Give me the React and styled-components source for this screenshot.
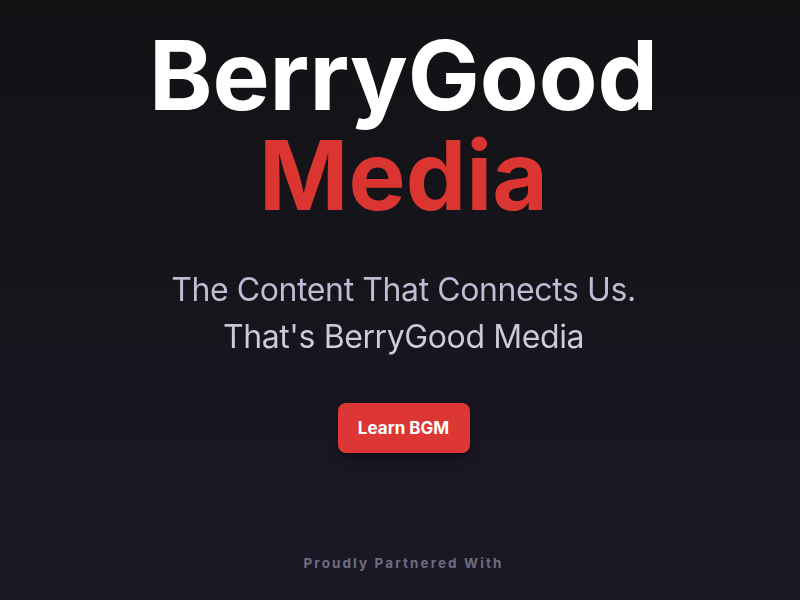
import React from "react";
import styled, { createGlobalStyle } from "styled-components";

const GlobalStyle = createGlobalStyle`
  html, body {
    margin: 0;
    padding: 0;
    background: #121215;
  }
  * { box-sizing: border-box; }
`;

const Page = styled.main`
  width: 800px;
  height: 600px;
  overflow: hidden;
  padding-left: 7px;
  background: linear-gradient(180deg, #121215 0%, #16151c 50%, #1b1826 100%);
  display: flex;
  flex-direction: column;
  align-items: center;
  font-family: Inter, "Noto Sans", sans-serif;
`;

const Title = styled.h1`
  margin: 25px 0 0;
  font-size: 96px;
  font-weight: 700;
  line-height: 100px;
  letter-spacing: 0;
  text-align: center;
  color: #ffffff;
`;

const Accent = styled.span`
  display: block;
  color: #db3532;
`;

const Tagline = styled.p`
  margin: 41px 0 0;
  font-size: 32px;
  font-weight: 400;
  line-height: 47px;
  text-align: center;
  letter-spacing: -0.4px;
  background: linear-gradient(180deg, #bdb8d6 0%, #c4c1d6 50%, #d6d5db 100%);
  -webkit-background-clip: text;
  background-clip: text;
  color: transparent;
`;

const Button = styled.button`
  margin-top: 43px;
  width: 132px;
  height: 50px;
  border: none;
  border-radius: 8px;
  background: #dc3734;
  color: #ffffff;
  font-family: inherit;
  font-size: 17px;
  font-weight: 700;
  letter-spacing: 0;
  box-shadow: 0 4px 10px rgba(0, 0, 0, 0.35);
  cursor: pointer;
`;

const Partners = styled.div`
  margin-top: 102px;
  font-size: 13.5px;
  font-weight: 700;
  letter-spacing: 2.1px;
  color: #6f6c80;
`;

export default function App() {
  return (
    <>
      <GlobalStyle />
      <Page>
        <Title>
          BerryGood
          <Accent>Media</Accent>
        </Title>
        <Tagline>
          The Content That Connects Us.
          <br />
          That's BerryGood Media
        </Tagline>
        <Button>Learn BGM</Button>
        <Partners>Proudly Partnered With</Partners>
      </Page>
    </>
  );
}
